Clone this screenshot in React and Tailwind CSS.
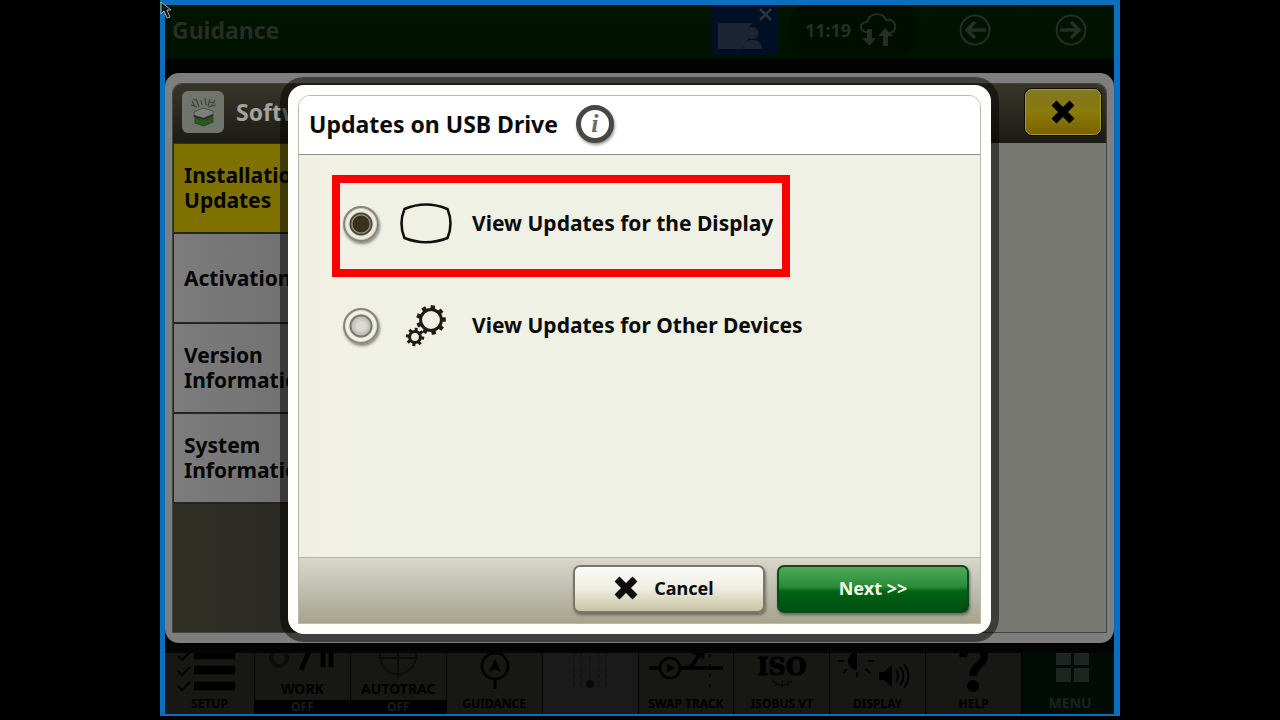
import React, { useState } from 'react';

const SECTIONS = ['Installations & Updates', 'Activations', 'Version Information', 'System Information'];

function Cross({ className }) {
  return (
    <svg viewBox="0 0 24 24" className={className} aria-hidden="true">
      <path d="M3 3 21 21M21 3 3 21" fill="none" stroke="currentColor" strokeWidth="7" />
    </svg>
  );
}

function Gear({ cx, cy, r, tip, teeth, width }) {
  return (
    <g fill="none" stroke="#1d1a17">
      <circle cx={cx} cy={cy} r={r} strokeWidth="3" />
      {Array.from({ length: teeth }, (_, i) => (
        <path
          key={i}
          d={`M${cx} ${cy - r}V${cy - tip}`}
          strokeWidth={width}
          transform={`rotate(${(360 / teeth) * i + 8} ${cx} ${cy})`}
        />
      ))}
    </g>
  );
}

function GearsIcon() {
  return (
    <svg viewBox="0 0 52 42" className="h-[42px] w-[52px]" aria-hidden="true">
      <Gear cx={31} cy={15} r={10.4} tip={14.8} teeth={9} width={4.4} />
      <Gear cx={15} cy={32} r={5.4} tip={9.2} teeth={8} width={3} />
    </svg>
  );
}

function ScreenIcon() {
  return (
    <svg viewBox="0 0 52 42" className="h-[42px] w-[52px]" aria-hidden="true">
      <path
        d="M4.500 6Q26-3 47.500 6Q53.500 20.500 47.500 35Q26 43.500 4.500 35Q-1.500 20.500 4.500 6Z"
        fill="none"
        stroke="#12100e"
        strokeWidth="2.600"
        strokeLinejoin="round"
      />
    </svg>
  );
}

function PackageIcon() {
  return (
    <svg viewBox="0 0 42 42" className="h-[42px] w-[42px]" aria-hidden="true">
      <g stroke="#42453e" strokeWidth="1.200" fill="none">
        <path d="M10 10l3 6M14 8l3 8M19 9l1 5M23 7l1 7M28 8l-2 7M33 9l-4 6M9 14l6 2M34 14l-8 2M11 8l5 2M26 11l7 1" />
      </g>
      <path d="M12 21l9-4 10 3v5l-9 4-10-3z" fill="#7d8077" stroke="#4c5048" />
      <path d="M13 27l9 3 9-4v5l-9 4-9-3z" fill="#2c5a1a" stroke="#2a4420" />
      <path d="M12 25l10 3 9-4" stroke="#2c3028" fill="none" strokeWidth="2" />
    </svg>
  );
}

function StatusBar() {
  return (
    <header className="flex h-[54px] shrink-0 items-center bg-[linear-gradient(#001400,#001100)] pb-1 pl-[7px] text-[#262d26]">
      <h1 className="text-[23px] font-bold leading-8">Guidance</h1>
      <button aria-label="Remote display" className="ml-auto h-full w-[66px] bg-[#001024]">
        <svg viewBox="0 0 66 50" className="h-[50px] w-[66px] text-[#1c2533]">
          <path d="M6 18h35a11 11 0 0 0-4 14l-7 12H6z" fill="currentColor" />
          <circle cx="40.500" cy="28" r="6" fill="currentColor" />
          <path d="M31 44c1-8 5-9 9-9s9 1 10 9z" fill="currentColor" />
          <path d="M48 4 59 15M59 4 48 15" stroke="#2c333a" strokeWidth="2.6" />
        </svg>
      </button>
      <div className="ml-3 mr-4 flex h-full w-[126px] items-center justify-center gap-2 rounded-2xl bg-[#000e00] pr-1">
        <time className="text-lg font-bold">11:19</time>
        <svg viewBox="0 0 38 36" className="h-9 w-[38px]" aria-hidden="true">
          <path d="M8 20C0 19 0 10 8 10 10 1 24-1 27 8c10-2 13 11 4 13" fill="none" stroke="currentColor" strokeWidth="2" />
          <path d="M8 17h5v9h4l-6.500 8L3 26h5zM24 34v-10h-5l7-8 8 8h-5v10z" fill="currentColor" />
        </svg>
      </div>
      <div className="flex h-full gap-[10px]">
        {['M27 16H7M16 8l-8 8 8 8', 'M5 16h20M16 8l8 8-8 8'].map((d, i) => (
          <button
            key={d}
            aria-label={i === 0 ? 'Back' : 'Forward'}
            className="flex h-full w-[86px] items-center justify-center bg-[#001300]"
          >
            <svg viewBox="0 0 32 32" className="h-8 w-8">
              <circle cx="16" cy="16" r="14.500" fill="none" stroke="currentColor" strokeWidth="2" />
              <path d={d} fill="none" stroke="currentColor" strokeWidth="3.600" />
            </svg>
          </button>
        ))}
      </div>
    </header>
  );
}

function SoftwareWindow() {
  return (
    <main className="mb-2 mt-[14px] flex min-h-0 flex-1 flex-col rounded-[14px] bg-[#7e7e7e] px-[7px] py-[10px]">
      <div className="flex min-h-0 flex-1 flex-col overflow-hidden rounded-t-[10px] border border-[#45433c] bg-[#797974]">
        <div className="flex h-[59px] shrink-0 items-center gap-3 bg-[linear-gradient(#38362a,#1c1b14)] pb-1 pl-[9px] pr-[5px]">
          <span className="rounded-md bg-[#70746c]">
            <PackageIcon />
          </span>
          <h2 className="text-[23px] font-bold leading-7 text-[#a2a2a0]">Software</h2>
          <button
            aria-label="Close"
            className="ml-auto flex h-[46px] w-[76px] items-center justify-center rounded-[7px] border border-[#a89d3c] bg-[linear-gradient(#827624,#8a7b0a_50%,#7d6200)] text-black shadow-[0_0_0_1px_#0c0b06]"
          >
            <Cross className="h-6 w-6" />
          </button>
        </div>
        <div className="flex min-h-0 flex-1">
          <nav className="flex w-[200px] flex-col bg-[linear-gradient(90deg,#302f25,#282824)] pt-px">
            {SECTIONS.map((name, i) => (
              <a
                key={name}
                href="#"
                className={
                  'flex h-[90px] items-center border-b-2 border-l border-[#25251f] pl-[10px] text-[21px] font-bold leading-[25px] text-[#050505] ' +
                  (i === 0 ? 'bg-[#7f7100]' : 'bg-[linear-gradient(90deg,#7c7c7c,#69696b)]')
                }
              >
                <span className="w-[170px]">{name}</span>
              </a>
            ))}
          </nav>
        </div>
      </div>
    </main>
  );
}

const SHORTCUTS = [
  {
    name: 'SETUP',
    art: (
      <>
        <path d="M32 2h41M32 17h41M32 33h41" stroke="#000" strokeWidth="8.500" />
        <path d="m16 3 4 4 8-8M16 18l4 4 8-8M16 33l4 4 8-8" stroke="#000" strokeWidth="2" />
      </>
    ),
  },
  {
    name: 'WORK',
    state: 'OFF',
    art: (
      <>
        <circle cx="25" cy="5" r="8" stroke="#0c0c0b" strokeWidth="4" />
        <path d="M57-6 47 17M69-4v18M77-4v18" stroke="#000" strokeWidth="4.500" />
      </>
    ),
  },
  {
    name: 'AUTOTRAC',
    state: 'OFF',
    art: (
      <>
        <circle cx="48" cy="3" r="18" stroke="#0d0d0b" strokeWidth="2" />
        <path d="M28 5h40M48-4v30" stroke="#0b0b0a" strokeWidth="2" />
      </>
    ),
  },
  {
    name: 'GUIDANCE',
    art: (
      <>
        <circle cx="49" cy="13" r="13" stroke="#000" strokeWidth="2.500" />
        <path d="M49 26v10" stroke="#000" strokeWidth="3" />
        <path d="m49 6 6 13-6-3-6 3z" fill="#000" />
      </>
    ),
  },
  {
    name: '',
    muted: true,
    art: (
      <>
        <path d="M48 3v24M39 0v34M57 0v34M32 0v34M64 0v34" stroke="#151516" strokeWidth="2" strokeDasharray="5 2" />
        <circle cx="48" cy="31" r="4" fill="#0a0a0b" />
      </>
    ),
  },
  {
    name: 'SWAP TRACK',
    art: (
      <>
        <path d="M11 15h74M46 15c12 0 10-10 17-14" stroke="#000" strokeWidth="3.500" />
        <circle cx="32" cy="15" r="10" fill="#171713" stroke="#000" strokeWidth="2.500" />
        <path d="m28 10 9 5-9 5 2-5zM53 0l14-4-1 10z" fill="#000" />
        <path d="M72 1v38" stroke="#080807" strokeWidth="2" strokeDasharray="3 7" />
      </>
    ),
  },
  {
    name: 'ISOBUS VT',
    art: (
      <>
        <text x="48" y="22" textAnchor="middle" fill="#000" stroke="#000" fontFamily="DejaVu Serif, serif" fontWeight="700" fontSize="24">
          ISO
        </text>
        <path d="M38 27q10 10 20 0M42 28v5M48 28v6M54 28v5" stroke="#0a0a08" strokeWidth="1.500" />
      </>
    ),
  },
  {
    name: 'DISPLAY',
    art: (
      <>
        <path d="M27-1a9 9 0 0 0 0 18zM49 19h5l8-7v22l-8-7h-5z" fill="#000" />
        <path
          d="M14 8H8M38 8h6M17 16l-4 4M36 16l4 4M27 19v5M66 17q4 6 0 12M70 14q7 9 0 18M74 11q9 12 0 24"
          stroke="#000"
          strokeWidth="1.800"
        />
      </>
    ),
  },
  {
    name: 'HELP',
    art: (
      <>
        <path d="M37 4C38-9 59-9 58 4c0 8-11 8-11 19" stroke="#000" strokeWidth="7.500" />
        <circle cx="47" cy="33" r="6" fill="#000" />
      </>
    ),
  },
  {
    name: 'MENU',
    menu: true,
    art: <path d="M34 0h15v12H34zM52 0h15v12H52zM34 15h15v14H34zM52 15h15v14H52z" fill="#1e2421" />,
  },
];

function ShortcutBar() {
  return (
    <nav className="grid h-[63px] shrink-0 grid-cols-[90px_repeat(8,1fr)_92px] border-t-2 border-[#050505] bg-[#171713]">
      {SHORTCUTS.map(({ name, state, art, menu, muted }, i) => (
        <button
          key={i}
          aria-label={name || 'Unavailable'}
          className={
            'flex min-w-0 flex-col items-center overflow-hidden ' +
            (menu ? 'bg-[#010d04] pl-1 text-[#1a211c]' : 'border-r border-black text-black ') +
            (muted ? 'bg-[#1a1a1b]' : '')
          }
        >
          <svg viewBox="0 0 96 40" fill="none" className={state ? 'h-[25px] w-24 shrink-0' : 'h-10 w-24 shrink-0'} preserveAspectRatio="xMidYMin slice" aria-hidden="true">
            {art}
          </svg>
          <span className={'whitespace-nowrap font-bold ' + (menu ? 'text-sm leading-5' : state ? 'text-sm leading-[22px]' : 'text-xs leading-[22px]')}>
            {name}
          </span>
          {state && <span className="w-full bg-black text-xs font-bold leading-[14px] text-[#1c1c1c]">{state}</span>}
        </button>
      ))}
    </nav>
  );
}

function Option({ value, label, icon, current, onSelect, highlighted }) {
  return (
    <label
      className={
        'flex h-[102px] max-w-full items-center border-8 pb-[5px] pl-[3px] text-[21px] font-bold text-[#0b0b0a] ' +
        (highlighted ? 'w-[458px] border-[#fe0000]' : 'w-[490px] border-transparent')
      }
    >
      <input
        type="radio"
        name="target"
        value={value}
        checked={current === value}
        onChange={() => onSelect(value)}
        className="h-9 w-9 shrink-0 appearance-none rounded-full border-2 border-[#85857a] bg-[radial-gradient(circle,#dcdcd6_0_4px,#bdbdb5_9px,#77776c_10px,#77776c_11px,#e4e4d8_12px,#f8f8f0_14px,#c2c2b0_17px)] shadow-[1px_2px_3px_rgba(0,0,0,0.45)] checked:bg-[radial-gradient(circle,#3b301d_0_8px,#a8a48a_9px,#4c4736_10px,#4c4736_11px,#dcdcd0_12px,#f2f2ea_14px,#b4b4a2_17px)]"
      />
      <span className="ml-[21px] mr-5 shrink-0">{icon}</span>
      <span className="whitespace-nowrap">{label}</span>
    </label>
  );
}

function UpdatesDialog() {
  const [target, setTarget] = useState('display');
  return (
    <section
      role="dialog"
      aria-labelledby="dialog-title"
      className="absolute inset-x-[123px] inset-y-20 flex flex-col rounded-2xl bg-[#fefefb] p-[10px] shadow-[0_0_0_8px_rgba(0,0,0,0.5)]"
    >
      <div className="flex flex-1 flex-col overflow-hidden rounded-t-[12px] border border-[#b9b9aa]">
        <header className="flex h-[59px] shrink-0 items-center gap-[18px] border-b border-[#8f8f84] bg-white pb-[2px] pl-[10px]">
          <h2 id="dialog-title" className="text-[23px] font-bold leading-8 text-[#0b0b0a]">
            Updates on USB Drive
          </h2>
          <button
            aria-label="Information"
            className="flex h-[38px] w-[38px] items-center justify-center rounded-full border-[5px] border-[#484743] bg-white font-['Liberation_Serif',serif] text-[26px] font-bold italic leading-7 text-[#6f6b60] shadow-[1px_2px_3px_rgba(0,0,0,0.4)]"
          >
            i
          </button>
        </header>
        <form className="flex flex-1 flex-col" onSubmit={(e) => e.preventDefault()}>
          <div className="flex-1 bg-[linear-gradient(90deg,#f1efe4,#f0f1e5_10%)] pl-[33px] pt-5">
            <Option value="display" label="View Updates for the Display" icon={<ScreenIcon />} current={target} onSelect={setTarget} highlighted />
            <Option value="devices" label="View Updates for Other Devices" icon={<GearsIcon />} current={target} onSelect={setTarget} />
          </div>
          <footer className="flex h-[66px] items-center justify-end gap-3 border-t border-[#b4b4a8] bg-[linear-gradient(#d9d6ca,#bfbdb0_50%,#a6a48b)] pb-[3px] pr-[11px] text-lg font-bold">
            <button
              type="button"
              className="flex h-12 w-48 items-center justify-center gap-4 rounded-[7px] border-2 border-[#77766a] bg-[linear-gradient(#fcfcf8,#edede1_50%,#c7c3a2)] pb-[2px] pr-[10px] text-[#0b0b0a] shadow-[1px_2px_3px_rgba(0,0,0,0.4)]"
            >
              <Cross className="h-6 w-6" />
              Cancel
            </button>
            <button
              type="submit"
              className="h-12 w-48 rounded-[7px] border-2 border-[#0d4a1b] bg-[linear-gradient(#4faa55,#2a8b3a_45%,#006414_55%,#004d12)] pb-[2px] text-[#f2f7ea] shadow-[1px_2px_3px_rgba(0,0,0,0.4)]"
            >
              Next &gt;&gt;
            </button>
          </footer>
        </form>
      </div>
    </section>
  );
}

export default function App() {
  return (
    <div className="flex h-screen min-h-[560px] justify-center bg-black pb-1 font-['Noto_Sans','Open_Sans',sans-serif]">
      <div className="relative flex w-3/4 flex-col border-b-2 border-l-[5px] border-r-[6px] border-t-[5px] border-[#0b6fbd] bg-[#030303]">
        <StatusBar />
        <SoftwareWindow />
        <ShortcutBar />
        <UpdatesDialog />
        <svg viewBox="0 0 14 20" className="absolute -left-[5px] -top-1 h-5 w-[14px]" aria-hidden="true">
          <path d="M1 1v12l3-3 3 7 3-1-3-7h4z" fill="#161616" stroke="#a8a8a8" />
        </svg>
      </div>
    </div>
  );
}
